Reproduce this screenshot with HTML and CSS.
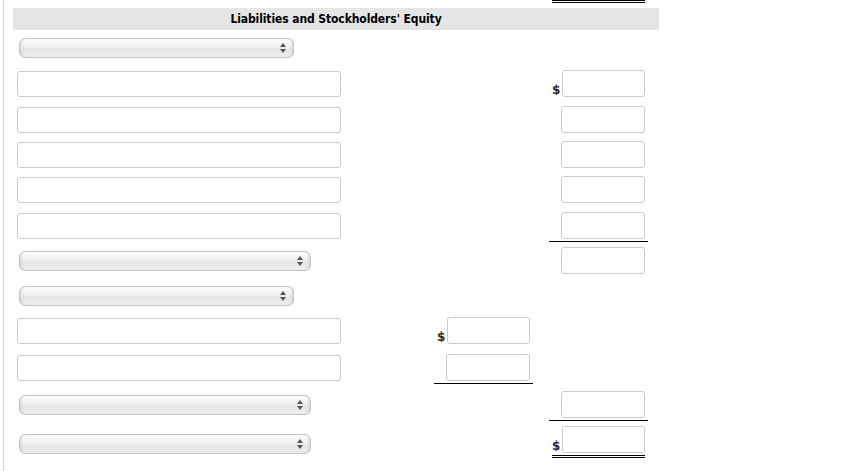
FILE: index.html
```html
<!DOCTYPE html>
<html>
<head>
<meta charset="utf-8">
<link rel="stylesheet" href="styles.css">
</head>
<body>
<div class="page">
  <div class="topline"></div>
  <div class="header">Liabilities and Stockholders' Equity</div>

  <div class="row h36">
    <div class="left"><div class="select w275"><svg class="arr" width="6" height="10" viewBox="0 0 6 10"><path d="M3 0 L6 4 H0 Z M0 6 H6 L3 10 Z" fill="#555"/></svg></div></div>
    <div class="mid"></div>
    <div class="right"></div>
  </div>

  <div class="row h36">
    <div class="left"><div class="text"></div></div>
    <div class="mid"></div>
    <div class="right"><div class="cell"><span class="dollar">$</span><div class="num"></div></div></div>
  </div>

  <div class="row h35">
    <div class="left"><div class="text"></div></div>
    <div class="mid"></div>
    <div class="right"><div class="cell"><div class="num"></div></div></div>
  </div>

  <div class="row h35">
    <div class="left"><div class="text"></div></div>
    <div class="mid"></div>
    <div class="right"><div class="cell"><div class="num"></div></div></div>
  </div>

  <div class="row h36">
    <div class="left"><div class="text"></div></div>
    <div class="mid"></div>
    <div class="right"><div class="cell"><div class="num"></div></div></div>
  </div>

  <div class="row h35">
    <div class="left"><div class="text"></div></div>
    <div class="mid"></div>
    <div class="right"><div class="cell line"><div class="num"></div></div></div>
  </div>

  <div class="row h35">
    <div class="left"><div class="select w292"><svg class="arr" width="6" height="10" viewBox="0 0 6 10"><path d="M3 0 L6 4 H0 Z M0 6 H6 L3 10 Z" fill="#555"/></svg></div></div>
    <div class="mid"></div>
    <div class="right"><div class="cell"><div class="num"></div></div></div>
  </div>

  <div class="row h35">
    <div class="left"><div class="select w275"><svg class="arr" width="6" height="10" viewBox="0 0 6 10"><path d="M3 0 L6 4 H0 Z M0 6 H6 L3 10 Z" fill="#555"/></svg></div></div>
    <div class="mid"></div>
    <div class="right"></div>
  </div>

  <div class="row h36">
    <div class="left"><div class="text"></div></div>
    <div class="mid"><div class="cell"><span class="dollar">$</span><div class="num"></div></div></div>
    <div class="right"></div>
  </div>

  <div class="row h37">
    <div class="left"><div class="text"></div></div>
    <div class="mid"><div class="cell line"><div class="num"></div></div></div>
    <div class="right"></div>
  </div>

  <div class="row h38">
    <div class="left"><div class="select w292"><svg class="arr" width="6" height="10" viewBox="0 0 6 10"><path d="M3 0 L6 4 H0 Z M0 6 H6 L3 10 Z" fill="#555"/></svg></div></div>
    <div class="mid"></div>
    <div class="right"><div class="cell line"><div class="num"></div></div></div>
  </div>

  <div class="row h39">
    <div class="left"><div class="select w292"><svg class="arr" width="6" height="10" viewBox="0 0 6 10"><path d="M3 0 L6 4 H0 Z M0 6 H6 L3 10 Z" fill="#555"/></svg></div></div>
    <div class="mid"></div>
    <div class="right"><div class="cell double"><span class="dollar">$</span><div class="num"></div></div></div>
  </div>
</div>
</body>
</html>
```

FILE: styles.css
```css
html, body {
  margin: 0;
  padding: 0;
  background: #fff;
}
body {
  font-family: "DejaVu Sans", Verdana, sans-serif;
  font-size: 11px;
  color: #000;
}
.page {
  margin-left: 3px;
  border-left: 1px solid #c9d8ea;
  min-height: 471px;
  padding-left: 9px;
  box-sizing: border-box;
}
.topline {
  margin-left: 539px;
  width: 93px;
  height: 0;
  border-top: 3px double #000;
}
.header {
  margin-top: 5px;
  width: 646px;
  height: 22px;
  background: #e5e5e5;
  text-align: center;
  font-family: "DejaVu Sans Condensed", "DejaVu Sans", sans-serif;
  font-weight: bold;
  font-size: 12px;
  line-height: 22px;
  letter-spacing: -0.1px;
}
.row {
  display: grid;
  grid-template-columns: 421px 99px 115px;
  align-items: center;
}
.h35 { height: 35px; }
.h36 { height: 36px; }
.h37 { height: 37px; }
.h38 { height: 38px; }
.h39 { height: 39px; }
.left, .mid, .right {
  display: flex;
  align-items: center;
}
.left { padding-left: 4px; }
.right { padding-left: 16px; }
.text {
  width: 324px;
  height: 26px;
  box-sizing: border-box;
  border: 1px solid #cbcbcb;
  border-radius: 3px;
  background: #fff;
}
.select {
  margin-left: 2px;
  height: 20px;
  box-sizing: border-box;
  border: 1px solid #c4c4c4;
  border-radius: 6px;
  background: linear-gradient(#fbfbfb 0%, #f1f1f1 40%, #e6e6e6 60%, #ededed 100%);
  box-shadow: inset 3px 0 3px -2px rgba(0,0,0,0.12), inset -3px 0 3px -2px rgba(0,0,0,0.12);
  display: flex;
  align-items: center;
  justify-content: flex-end;
  padding-right: 7px;
}
.w275 { width: 275px; }
.w292 { width: 292px; }
.arr { display: block; }
.cell {
  width: 99px;
  box-sizing: border-box;
  padding: 2px 3px 2px 3px;
  border-bottom: 1px solid transparent;
  display: flex;
  align-items: flex-end;
  justify-content: flex-end;
}
.cell.line { border-bottom-color: #000; }
.cell.double {
  width: 93px;
  margin-left: 3px;
  margin-bottom: 4px;
  padding: 0 0 2px 0;
  border-bottom: 3px double #000;
}
.dollar {
  font-family: "DejaVu Sans", Verdana, sans-serif;
  font-size: 12px;
  font-weight: bold;
  color: #2a2a2a;
  line-height: 13px;
  margin-right: 2px;
}
.num {
  width: 84px;
  height: 27px;
  box-sizing: border-box;
  border: 1px solid #cbcbcb;
  border-radius: 3px;
  background: #fff;
}
```
